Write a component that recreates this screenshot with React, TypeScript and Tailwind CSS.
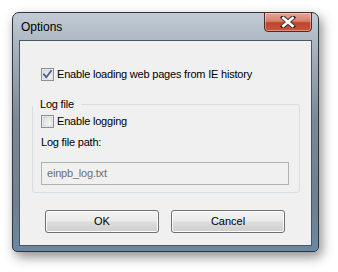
const FONT = "font-['Liberation_Sans','Arial',sans-serif]"

function CheckBox({ checked }: { checked?: boolean }) {
  return (
    <svg width="13" height="13" viewBox="0 0 13 13" className="shrink-0">
      <defs>
        <linearGradient id="cbfill" x1="0" y1="0" x2="1" y2="1">
          <stop offset="0" stopColor="#d9dbdd" />
          <stop offset="1" stopColor="#fbfbfb" />
        </linearGradient>
      </defs>
      <rect x="0.5" y="0.5" width="12" height="12" fill="#f4f4f4" stroke="#8e8f8f" />
      <rect x="2" y="2" width="9" height="9" fill="url(#cbfill)" stroke="#c5c7c9" strokeWidth="0.6" />
      {checked && (
        <path
          d="M3 6.4 L5.3 9.2 L10 3"
          fill="none"
          stroke="#4a5f97"
          strokeWidth="1.8"
          strokeLinecap="square"
        />
      )}
    </svg>
  )
}

function Button({ label }: { label: string }) {
  return (
    <button className="w-[114px] h-[23px] rounded-[3px] border border-[#707070] bg-[linear-gradient(#f2f2f2_0%,#ebebeb_48%,#dddddd_52%,#cfcfcf_100%)] shadow-[inset_0_0_0_1px_#fcfcfc] text-[11px] text-black">
      {label}
    </button>
  )
}

export default function App() {
  return (
    <div className={`w-[338px] h-[272px] bg-white pt-[12px] pl-[12px] ${FONT}`}>
      {/* window frame */}
      <div className="w-[307px] h-[240px] flex flex-col px-[6px] pb-[5px] rounded-t-[7px] rounded-b-[5px] border border-[#2e353e] bg-[linear-gradient(#c3ccd5_0%,#a9b4bf_14%,#7b8895_45%,#6f7f8f_80%,#6a88a3_100%)] shadow-[3px_5px_12px_rgba(0,0,0,0.45)]">
        {/* title bar */}
        <div className="h-[27px] flex items-start justify-between shrink-0">
          <span className="pl-[2px] pt-[7px] text-[12px] leading-[14px] text-black">Options</span>
          <div className="w-[48px] h-[20px] -mt-[1px] rounded-b-[4px] border border-[#4a2b28] bg-[linear-gradient(#e7a597_0%,#d6806c_45%,#c0432b_55%,#c9563b_100%)] shadow-[inset_0_0_0_1px_rgba(255,255,255,0.35)] flex items-center justify-center">
            <svg width="16" height="12" viewBox="0 0 16 12">
              <path d="M3 1.5 L13 10.5 M13 1.5 L3 10.5" stroke="#3a2a2a" strokeWidth="4.4" strokeLinecap="square" />
              <path d="M3.4 2 L12.6 10 M12.6 2 L3.4 10" stroke="#ffffff" strokeWidth="2.6" strokeLinecap="square" />
            </svg>
          </div>
        </div>

        {/* client area */}
        <div className="flex-1 border border-[#4b5663] bg-[#f0f0f0] text-[11px] leading-[13px] tracking-[-0.2px] text-black">
          <label className="mt-[27px] ml-[21px] flex items-center gap-[3px]">
            <CheckBox checked />
            <span>Enable loading web pages from IE history</span>
          </label>

          <fieldset className="mt-[17px] ml-[12px] w-[268px] border border-[#d5dfe5] rounded-[3px] pl-[8px] pb-[7px]">
            <legend className="-ml-[8px] px-[7px] leading-[13px]">Log file</legend>
            <label className="mt-[4px] flex items-center gap-[3px]">
              <CheckBox />
              <span>Enable logging</span>
            </label>
            <div className="mt-[8px]">Log file path:</div>
            <div className="mt-[13px] w-[248px] h-[23px] border border-[#adb2b5] bg-[#f0f0f0] pl-[5px] flex items-center text-[#6d6d6d]">
              einpb_log.txt
            </div>
          </fieldset>

          <div className="mt-[17px] ml-[25px] flex gap-[12px] tracking-normal">
            <Button label="OK" />
            <Button label="Cancel" />
          </div>
        </div>
      </div>
    </div>
  )
}
